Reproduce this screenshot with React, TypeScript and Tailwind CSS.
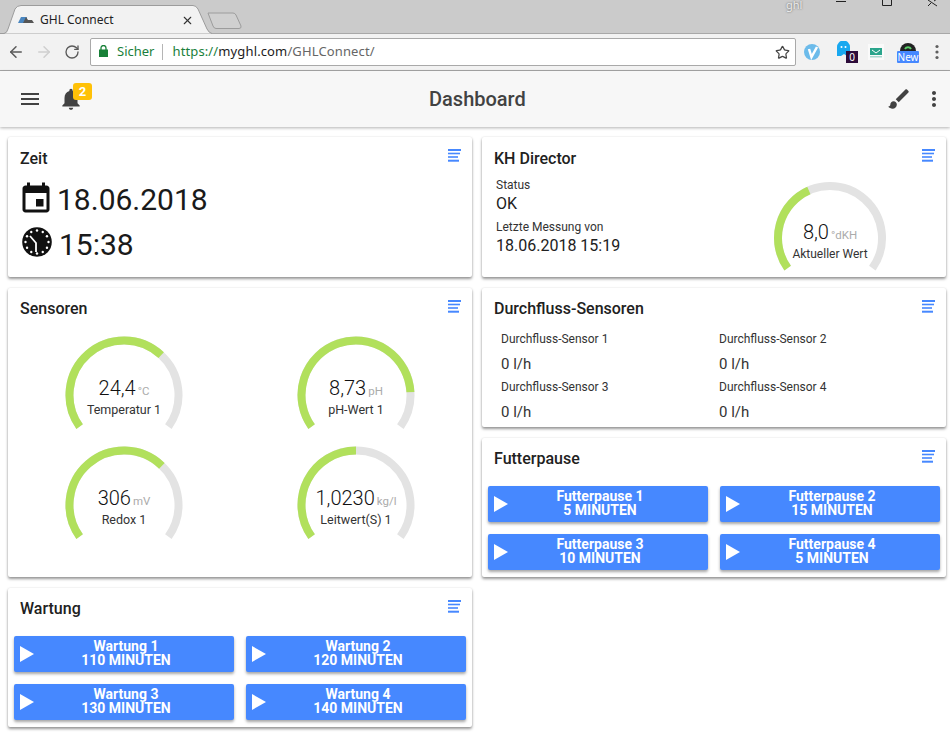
import { ArrowLeft, ArrowRight, RotateCw, Star, X } from "lucide-react";
import type { ReactNode } from "react";

const START = -125.5;
const END = 125.5;

function polar(r: number, deg: number) {
  const a = (deg * Math.PI) / 180;
  return { x: 59 + r * Math.sin(a), y: 59 - r * Math.cos(a) };
}

function arc(r: number, from: number, to: number) {
  const a = polar(r, from);
  const b = polar(r, to);
  const large = to - from > 180 ? 1 : 0;
  return `M ${a.x} ${a.y} A ${r} ${r} 0 ${large} 1 ${b.x} ${b.y}`;
}

function Gauge({ value, unit, label, angle, compact }: { value: string; unit: string; label: string; angle: number; compact?: boolean }) {
  const r = compact ? 52 : 54.5;
  return (
    <div className="relative w-[118px] h-[96px]">
      <svg width="118" height="96" viewBox="0 0 118 96" fill="none" strokeWidth="8">
        <path d={arc(r, START, END)} stroke="#e3e3e3" />
        <path d={arc(r, START, angle)} stroke="#b1e05c" />
      </svg>
      <div className={`absolute left-0 right-0 flex flex-col items-center ${compact ? "top-[41px]" : "top-[40px]"}`}>
        <div className="flex items-baseline h-[24px] leading-[24px] text-[20px] font-light text-[#111] whitespace-nowrap">
          {value}
          <span className="ml-[2px] text-[11.5px] font-normal text-[#ababab]">{unit}</span>
        </div>
        <div className={`mt-[2px] leading-[16px] text-[#333] whitespace-nowrap ${compact ? "text-[12px]" : "text-[12.5px]"}`}>{label}</div>
      </div>
    </div>
  );
}

function ListIcon() {
  return (
    <svg width="13" height="13" viewBox="0 0 13 13" fill="#4688ff">
      <rect x="0" y="0" width="13" height="2" />
      <rect x="0" y="3.7" width="12" height="1.6" />
      <rect x="0" y="7.2" width="10" height="1.6" />
      <rect x="0" y="10.7" width="11" height="2" />
    </svg>
  );
}

function Card({ title, className, first, children }: { title: string; className: string; first?: boolean; children?: ReactNode }) {
  return (
    <section className={`bg-white rounded-[2px] shadow-[0_2px_3px_rgba(0,0,0,0.4),0_0_2px_rgba(0,0,0,0.12)] flex flex-col ${className}`}>
      <div className={`relative pl-3 ${first ? "pt-[13px]" : "pt-3"}`}>
        <h2 className="text-[16px] leading-[18px] font-medium text-[#212121]">{title}</h2>
        <div className="absolute right-[11px] top-3">
          <ListIcon />
        </div>
      </div>
      {children}
    </section>
  );
}

function ActionButton({ title, time }: { title: string; time: string }) {
  return (
    <button className="relative h-9 pl-[4px] pb-[2px] rounded-[2px] bg-[#4688ff] text-white text-[14px] leading-[14px] font-bold shadow-[0_2px_3px_rgba(0,0,0,0.35)]">
      <svg className="absolute left-[6px] top-[10px]" width="14" height="16" viewBox="0 0 14 16" fill="white">
        <path d="M0 0 L14 8 L0 16 Z" />
      </svg>
      {title}
      <br />
      {time}
    </button>
  );
}

function WindowControls() {
  return (
    <svg className="absolute left-[830px] top-0" width="120" height="10" viewBox="0 0 120 10" fill="none" stroke="#222" strokeWidth="1">
      <path d="M6 1.5 H16" />
      <path d="M52.5 -3 H61.5 V5.5 H52.5 Z" />
      <path d="M98 0 L107 6 M107 -1 L104 1" />
      <path d="M98 6 L101 3" />
    </svg>
  );
}

function Browser() {
  return (
    <div className="font-['Noto_Sans',sans-serif]">
      <div className="relative h-[33px] bg-[#cbcbcb]">
        <svg className="absolute left-0 top-0" width="245" height="34" viewBox="0 0 245 34" fill="none">
          <path d="M0 33.5 H4 Q7 33 8 29 L15 9 Q17 5.5 21 5.5 H193 Q196 5.5 198 9 L207 29 Q209 33 212 33.5" fill="#f2f2f2" stroke="#9c9c9c" />
          <path d="M208 13 H233 Q235 13 236 15 L241 26 Q241.5 28.5 239 28.5 H216 Q214 28.5 213 26 Z" fill="#d0d0d0" stroke="#9c9c9c" />
          <path d="M18 23 L21 17 H27 L25 23 Z" fill="#4a86c0" />
          <path d="M23 23 H34 L32 20 H28 L26 17 Z" fill="#555" />
        </svg>
        <div className="absolute left-[40px] top-[12px] text-[12px] leading-[16px] text-[#222]">GHL Connect</div>
        <X className="absolute left-[181px] top-[14px] text-[#333]" size={13} strokeWidth={2} />
        <div className="absolute left-[786px] top-0 text-[11px] leading-[9px] text-[#eee] [text-shadow:0_0_2px_#555]">ghl</div>
        <WindowControls />
      </div>
      <div className="h-[38px] bg-[#f2f2f2] border-y border-[#a8a8a8] flex items-center pl-[7px]">
        <ArrowLeft size={18} strokeWidth={2} className="text-[#5a5a5a]" />
        <ArrowRight size={18} strokeWidth={2} className="ml-[10px] text-[#cfcfcf]" />
        <RotateCw size={16} strokeWidth={2} className="ml-[11px] text-[#5a5a5a]" />
        <div className="ml-[10px] w-[706px] h-[28px] bg-white border border-[#a9a9a9] rounded-[2px] flex items-center pl-2 pr-[5px] text-[13px]">
          <svg width="9" height="12" viewBox="0 0 9 12" className="-mt-[2px]">
            <rect x="0" y="4.5" width="9" height="7.5" fill="#188038" />
            <path d="M2 5 V3 A2.5 2.5 0 0 1 7 3 V5" fill="none" stroke="#188038" strokeWidth="1.3" />
          </svg>
          <span className="ml-[9px] text-[#1a7f3c]">Sicher</span>
          <span className="ml-[8px] w-px h-[16px] bg-[#b5b5b5]" />
          <span className="ml-[9px] text-[#1a7f3c] tracking-[0.01em]">https://</span>
          <span className="text-[#1c1c1c] tracking-[0.01em]">myghl.com</span>
          <span className="text-[#666] tracking-[0.01em]">/GHLConnect/</span>
          <Star size={15} strokeWidth={2} className="ml-auto text-[#444]" />
        </div>
        <svg className="ml-[8px]" width="16" height="16" viewBox="0 0 16 16">
          <circle cx="8" cy="8" r="8" fill="#6cbbea" />
          <path d="M5 5 L7.5 13 L13 3" fill="none" stroke="white" strokeWidth="2.5" />
        </svg>
        <div className="relative ml-[17px] w-[21px] h-[22px]">
          <svg width="14" height="16" viewBox="0 0 14 16" className="absolute left-0 top-0">
            <path d="M0 15 V6 A6 6 0 0 1 13 6 V13 L10 15 L7 13 L4 15 Z" fill="#18a8f0" />
            <circle cx="4.5" cy="6" r="1" fill="white" />
            <circle cx="8.5" cy="6" r="1" fill="white" />
          </svg>
          <div className="absolute left-[9px] top-[10px] w-[12px] h-[12px] bg-[#2d0c3a] text-white text-[10px] leading-[12px] text-center">0</div>
        </div>
        <svg className="ml-[10px]" width="16" height="16" viewBox="0 0 16 16">
          <rect width="16" height="16" fill="#fafafa" />
          <rect x="2" y="4" width="12" height="7" fill="#2aa58c" />
          <path d="M4 6 L8 9 L12 6" fill="none" stroke="white" />
          <rect x="2" y="12" width="12" height="1.5" fill="#a9d8cf" />
        </svg>
        <div className="relative ml-[13px] w-[22px] h-[22px]">
          <svg width="16" height="10" viewBox="0 0 16 10" className="absolute left-[3px] top-0">
            <path d="M0 10 A8 8 0 0 1 16 10 Z" fill="#222" />
            <path d="M5 8 A3.5 3.5 0 0 1 11 8" fill="none" stroke="#5cd06a" strokeWidth="2" />
          </svg>
          <div className="absolute left-0 top-[10px] w-[22px] h-[12px] bg-[#4688ff] rounded-[1px] text-white text-[10px] leading-[12px] text-center">New</div>
        </div>
        <svg className="ml-[15px]" width="6" height="16" viewBox="0 0 6 16" fill="#5f5f5f">
          <circle cx="3" cy="2.5" r="1.6" />
          <circle cx="3" cy="8" r="1.6" />
          <circle cx="3" cy="13.5" r="1.6" />
        </svg>
      </div>
    </div>
  );
}

function Header() {
  return (
    <header className="h-[56px] bg-[#f7f7f7] shadow-[0_1px_3px_rgba(0,0,0,0.3)] flex items-center pl-[18px] pr-[4px] text-[#424242]">
      <svg width="24" height="24" viewBox="0 0 24 24" fill="#424242">
        <path d="M3 18h18v-2H3v2zm0-5h18v-2H3v2zm0-7v2h18V6H3z" />
      </svg>
      <div className="relative ml-[16px] w-[26px] h-[26px]">
        <svg width="26" height="26" viewBox="0 0 24 24" fill="#424242">
          <path d="M12 22c1.1 0 2-.9 2-2h-4c0 1.1.89 2 2 2zm6-6v-5c0-3.07-1.64-5.64-4.5-6.32V4c0-.83-.67-1.5-1.5-1.5s-1.5.67-1.5 1.5v.68C7.63 5.36 6 7.92 6 11v5l-2 2v1h16v-1l-2-2z" />
        </svg>
        <div className="absolute left-[15px] top-[-3px] w-[19px] h-[17px] rounded-[3px] bg-[#ffc107] text-white text-[13px] leading-[17px] font-bold text-center">2</div>
      </div>
      <h1 className="ml-[345px] text-[20px] font-medium">Dashboard</h1>
      <svg className="ml-auto" width="26" height="26" viewBox="0 0 24 24" fill="#424242">
        <path d="M7 14c-1.66 0-3 1.34-3 3 0 1.31-1.16 2-2 2 .92 1.22 2.49 2 4 2 2.21 0 4-1.79 4-4 0-1.66-1.34-3-3-3zm13.71-9.37l-1.34-1.34c-.39-.39-1.02-.39-1.41 0L9 12.25 11.75 15l8.96-8.96c.39-.39.39-1.03 0-1.41z" />
      </svg>
      <svg className="ml-[10px]" width="24" height="24" viewBox="0 0 24 24" fill="#424242">
        <path d="M12 8c1.1 0 2-.9 2-2s-.9-2-2-2-2 .9-2 2 .9 2 2 2zm0 2c-1.1 0-2 .9-2 2s.9 2 2 2 2-.9 2-2-.9-2-2-2zm0 6c-1.1 0-2 .9-2 2s.9 2 2 2 2-.9 2-2-.9-2-2-2z" />
      </svg>
    </header>
  );
}

function ButtonGrid({ items }: { items: [string, string][] }) {
  return (
    <div className="grid grid-cols-2 gap-3 px-[6px] mt-[18px]">
      {items.map(([title, time]) => (
        <ActionButton key={title} title={title} time={time} />
      ))}
    </div>
  );
}

const flowSensors = ["Durchfluss-Sensor 1", "Durchfluss-Sensor 2", "Durchfluss-Sensor 3", "Durchfluss-Sensor 4"];
const clockDots = [0, 30, 60, 90, 120, 150, 180, 210, 240, 270, 300, 330];

export default function App() {
  return (
    <div className="h-[746px] overflow-hidden bg-white font-['Roboto',sans-serif]">
      <Browser />
      <Header />
      <main className="grid grid-cols-2 gap-[10px] pl-2 pr-1 pt-[10px]">
        <div className="flex flex-col gap-[11px]">
          <Card title="Zeit" className="h-[140px]" first>
            <div className="pl-[10px] mt-[9px] flex items-center text-[30px] leading-[45px] text-[#1a1a1a]">
              <svg width="36" height="36" viewBox="0 0 24 24" fill="#111" className="-translate-y-[1px]">
                <path d="M17 12h-5v5h5v-5zM16 1v2H8V1H6v2H5c-1.11 0-1.99.9-1.99 2L3 19c0 1.1.89 2 2 2h14c1.1 0 2-.9 2-2V5c0-1.1-.9-2-2-2h-1V1h-2zm3 18H5V8h14v11z" />
              </svg>
              <span className="ml-[3px]">18.06.2018</span>
            </div>
            <div className="pl-[14px] flex items-center text-[30px] leading-[45px] text-[#1a1a1a]">
              <svg width="30" height="30" viewBox="0 0 30 30" className="-translate-y-[3px]">
                <circle cx="15" cy="15" r="14.8" fill="#111" />
                {clockDots.map((a) => (
                  <circle key={a} cx={15 + 11.5 * Math.sin((a * Math.PI) / 180)} cy={15 - 11.5 * Math.cos((a * Math.PI) / 180)} r="1.2" fill="#fff" />
                ))}
                <path d="M8 9 L14 16 V25" fill="none" stroke="#fff" strokeWidth="1.8" />
              </svg>
              <span className="ml-[7px]">15:38</span>
            </div>
          </Card>
          <Card title="Sensoren" className="h-[289px]">
            <div className="grid grid-cols-2 justify-items-center gap-y-[14px] mt-[18px]">
              <Gauge value="24,4" unit="°C" label="Temperatur 1" angle={43} />
              <Gauge value="8,73" unit="pH" label="pH-Wert 1" angle={87} />
              <Gauge value="306" unit="mV" label="Redox 1" angle={44} />
              <Gauge value="1,0230" unit="kg/l" label="Leitwert(S) 1" angle={0} />
            </div>
          </Card>
          <Card title="Wartung" className="h-[139px]">
            <ButtonGrid
              items={[
                ["Wartung 1", "110 MINUTEN"],
                ["Wartung 2", "120 MINUTEN"],
                ["Wartung 3", "130 MINUTEN"],
                ["Wartung 4", "140 MINUTEN"],
              ]}
            />
          </Card>
        </div>
        <div className="flex flex-col gap-[11px]">
          <Card title="KH Director" className="h-[140px]" first>
            <div className="flex justify-between pl-[14px] pr-[57px]">
              <div className="text-[#333]">
                <div className="mt-[9px] text-[12px] leading-[16px]">Status</div>
                <div className="mt-[1px] text-[16px] leading-[20px] text-[#212121]">OK</div>
                <div className="mt-[5px] text-[12px] leading-[16px]">Letzte Messung von</div>
                <div className="mt-[1px] text-[16px] leading-[20px] text-[#212121]">18.06.2018 15:19</div>
              </div>
              <div className="mt-[11px]">
                <Gauge value="8,0" unit="°dKH" label="Aktueller Wert" angle={-24} compact />
              </div>
            </div>
          </Card>
          <Card title="Durchfluss-Sensoren" className="h-[139px]">
            <div className="grid grid-cols-[218px_1fr] pl-[19px] mt-[7px]">
              {flowSensors.map((name) => (
                <div key={name} className="h-[48px] pt-[6px] text-[#333]">
                  <div className="text-[12px] leading-[16px]">{name}</div>
                  <div className="mt-[7px] text-[15px] leading-[20px] text-[#333]">0 l/h</div>
                </div>
              ))}
            </div>
          </Card>
          <Card title="Futterpause" className="h-[139px]">
            <ButtonGrid
              items={[
                ["Futterpause 1", "5 MINUTEN"],
                ["Futterpause 2", "15 MINUTEN"],
                ["Futterpause 3", "10 MINUTEN"],
                ["Futterpause 4", "5 MINUTEN"],
              ]}
            />
          </Card>
        </div>
      </main>
    </div>
  );
}
